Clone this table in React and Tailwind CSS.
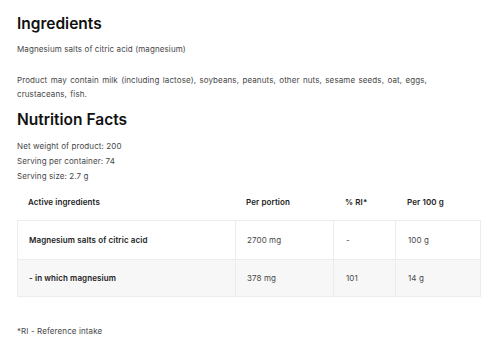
import React from 'react';

const rows = [
  { name: 'Magnesium salts of citric acid', portion: '2700 mg', ri: '-', per100: '100 g', bg: 'bg-white', h: 'h-[38px]' },
  { name: '- in which magnesium', portion: '378 mg', ri: '101', per100: '14 g', bg: 'bg-[#f8f7f8]', h: 'h-[37px]' },
];

const cols = 'grid grid-cols-[218px_98px_62px_85px]';

export default function App() {
  return (
    <div className="w-[500px] h-[358px] bg-white px-[17px] pt-[14px] font-['Inter',sans-serif] text-[#474747] overflow-hidden">
      <h2 className="text-[15.5px] leading-[20px] font-semibold text-[#111]">Ingredients</h2>
      <p className="mt-[8px] text-[8px] leading-[15px] tracking-[0.1px]">Magnesium salts of citric acid (magnesium)</p>
      <p className="mt-[16px] max-w-[440px] text-[8px] leading-[14px] tracking-[0.1px] [word-spacing:1px]">
        Product may contain milk (including lactose), soybeans, peanuts, other nuts, sesame seeds, oat, eggs,
        crustaceans, fish.
      </p>

      <h2 className="mt-[9px] text-[15.5px] leading-[20px] font-semibold text-[#111]">Nutrition Facts</h2>
      <div className="mt-[9px] text-[8px] leading-[15px] tracking-[0.1px]">
        <p>Net weight of product: 200</p>
        <p>Serving per container: 74</p>
        <p>Serving size: 2.7 g</p>
      </div>

      <div className="w-[464px] text-[8px] tracking-[0.1px]">
        <div className={`${cols} h-[36px] items-center font-semibold text-[#222]`}>
          <div className="pl-[11px]">Active ingredients</div>
          <div className="pl-[11px]">Per portion</div>
          <div className="pl-[12px]">% RI*</div>
          <div className="pl-[12px]">Per 100 g</div>
        </div>
        <div className="border border-[#ececec]">
          {rows.map((r, i) => (
            <div key={i} className={`${cols} ${r.h} ${r.bg} ${i > 0 ? 'border-t border-[#ececec]' : ''}`}>
              <div className="pl-[11px] flex items-center font-semibold text-[#222] border-r border-[#ececec]">{r.name}</div>
              <div className="pl-[11px] flex items-center border-r border-[#ececec]">{r.portion}</div>
              <div className="pl-[12px] flex items-center border-r border-[#ececec]">{r.ri}</div>
              <div className="pl-[12px] flex items-center">{r.per100}</div>
            </div>
          ))}
        </div>
      </div>

      <p className="mt-[27px] text-[8px] leading-[15px] tracking-[0.1px]">*RI - Reference intake</p>
    </div>
  );
}
